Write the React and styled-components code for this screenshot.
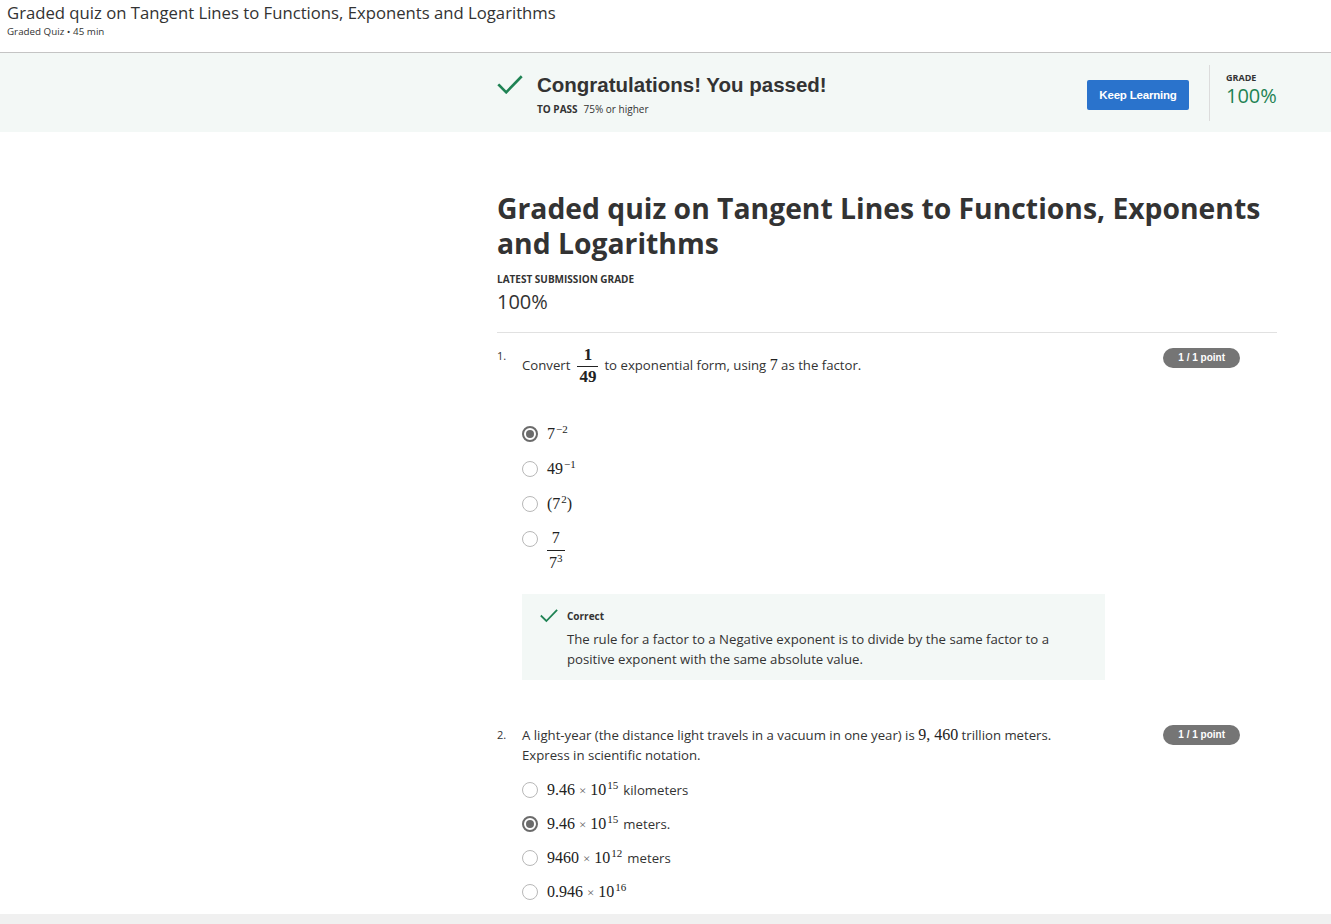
import React from 'react';
import styled, { createGlobalStyle } from 'styled-components';

const GlobalStyle = createGlobalStyle`
body {
    margin: 0;
    background: #fff;
    font-family: 'Open Sans', 'Liberation Sans', sans-serif;
    color: #333;
}
`;

const Header = styled.header`
    height: 53px;
    box-sizing: border-box;
    padding: 3px 7px 0;
    border-bottom: 1px solid #c4c4c4;
`;

const HeaderTitle = styled.div`
    font-size: 16.7px;
    line-height: 20px;
    color: #333;
`;

const HeaderMeta = styled.div`
    font-size: 9.8px;
    line-height: 12px;
    margin-top: 3px;
    color: #333;
`;

const Banner = styled.section`
    height: 79px;
    background: #f3f8f6;
    display: flex;
    align-items: center;
`;

const Column = styled.div`
    margin-left: 497px;
    width: 780px;
`;

const BannerRow = styled(Column)`
    display: flex;
    align-items: center;
    justify-content: space-between;
`;

const PassBlock = styled.div`
    display: grid;
    grid-template-columns: 40px auto;
    align-items: center;
    margin-top: 2px;
`;

const PassTitle = styled.div`
    font-family: 'Liberation Sans', Arial, sans-serif;
    font-weight: bold;
    font-size: 20.5px;
    line-height: 26px;
    color: #333;
`;

const PassMeta = styled.div`
    grid-column: 2;
    font-size: 10px;
    line-height: 14px;
    margin-top: 4px;
    b {
        font-weight: 700;
        margin-right: 6px;
    }
`;

const RightGroup = styled.div`
    display: flex;
    align-items: center;
`;

const KeepButton = styled.button`
    width: 102px;
    height: 30px;
    border: none;
    border-radius: 2px;
    background: #2a73cc;
    color: #fff;
    font-family: 'Liberation Sans', Arial, sans-serif;
    font-weight: bold;
    font-size: 11.5px;
    letter-spacing: -0.2px;
    margin-top: 4px;
    cursor: pointer;
`;

const Divider = styled.div`
    width: 1px;
    height: 56px;
    background: #dcdcdc;
    margin: 0 16px 0 20px;
`;

const GradeBlock = styled.div`
    width: 51px;
    height: 56px;
    box-sizing: border-box;
    padding-top: 7px;
`;

const GradeLabel = styled.div`
    font-size: 9px;
    line-height: 12px;
    font-weight: 700;
    color: #333;
`;

const GradeValue = styled.div`
    font-size: 20px;
    line-height: 24px;
    color: #1f8354;
`;

const Main = styled(Column)`
    padding-top: 59px;
`;

const Title = styled.h1`
    margin: 0;
    font-size: 28.3px;
    line-height: 35px;
    font-weight: 700;
    color: #333;
`;

const SubLabel = styled.div`
    margin-top: 11px;
    font-size: 10px;
    line-height: 14px;
    font-weight: 700;
    color: #333;
`;

const BigGrade = styled.div`
    margin-top: 4px;
    font-size: 20px;
    line-height: 24px;
    color: #333;
`;

const Rule = styled.hr`
    margin: 18px 0 13px;
    border: none;
    border-top: 1px solid #e1e1e1;
`;

const QRow = styled.div`
    display: grid;
    grid-template-columns: 25px 1fr auto;
    margin-top: ${p => p.$top || 0}px;
`;

const QNum = styled.div`
    font-size: 11px;
    line-height: 20px;
    color: #333;
`;

const QBody = styled.div`
    min-width: 0;
`;

const QText = styled.div`
    font-size: 13.2px;
    line-height: 20px;
    color: #333;
    max-width: 560px;
`;

const PointBadge = styled.div`
    height: 20px;
    margin: ${p => (p.$flat ? 0 : 2)}px 37px 0 20px;
    padding: 0 15px;
    border-radius: 10px;
    background: #757575;
    color: #fff;
    font-family: 'Liberation Sans', Arial, sans-serif;
    font-weight: bold;
    font-size: 10px;
    line-height: 20px;
    white-space: nowrap;
`;

const OptionList = styled.div`
    display: flex;
    flex-direction: column;
    gap: ${p => p.$gap}px;
    margin-top: ${p => p.$top}px;
`;

const Option = styled.label`
    display: flex;
    align-items: flex-start;
    gap: 9px;
    font-size: 13.2px;
    line-height: 20px;
    height: ${p => (p.$tall ? 'auto' : '20px')};
    color: #333;
`;

const Radio = styled.span`
    flex: none;
    width: 16px;
    height: 16px;
    margin-top: 2px;
    box-sizing: border-box;
    border-radius: 50%;
    border: ${p => (p.$checked ? '2px solid #6b6b6b' : '1px solid #b8b8b8')};
    background: #fff;
    display: flex;
    align-items: center;
    justify-content: center;
    &::after {
        content: '';
        display: ${p => (p.$checked ? 'block' : 'none')};
        width: 8px;
        height: 8px;
        border-radius: 50%;
        background: #6b6b6b;
    }
`;

const MathText = styled.span`
    font-family: 'Liberation Serif', 'DejaVu Serif', serif;
    font-size: 16px;
    line-height: 20px;
    color: #222;
    sup {
        font-size: 11px;
        vertical-align: 6px;
        line-height: 0;
        margin-left: 1px;
    }
`;

const Times = styled.span`
    margin: 0 4px;
    color: #666;
    font-size: 13px;
`;

const Unit = styled.span`
    margin-left: 5px;
    font-family: 'Open Sans', sans-serif;
    font-size: 13.2px;
    color: #333;
`;

const Fraction = styled.span`
    display: inline-flex;
    flex-direction: column;
    align-items: center;
    vertical-align: middle;
    margin: ${p => (p.$inline ? '0 6px 0 7px' : '0')};
    font-family: 'Liberation Serif', 'DejaVu Serif', serif;
    font-size: ${p => (p.$inline ? 17 : 16)}px;
    font-weight: ${p => (p.$inline ? 700 : 400)};
    color: #222;
    line-height: 18px;
    sup {
        font-size: 11px;
        vertical-align: 6px;
        line-height: 0;
    }
`;

const Numer = styled.span`
    align-self: stretch;
    text-align: center;
    padding: 0 2px ${p => p.$gap}px;
    border-bottom: 1px solid #222;
`;

const Denom = styled.span`
    padding: ${p => p.$gap}px 2px 0;
`;

const Feedback = styled.div`
    margin-top: 22px;
    width: 583px;
    box-sizing: border-box;
    background: #f3f8f6;
    padding: 15px 18px 11px;
    display: grid;
    grid-template-columns: 27px 1fr;
    align-items: center;
`;

const FeedbackTitle = styled.div`
    font-size: 10px;
    font-weight: 700;
    line-height: 14px;
    color: #333;
`;

const FeedbackText = styled.div`
    grid-column: 2;
    margin-top: 6px;
    font-size: 13.2px;
    line-height: 20px;
    color: #333;
`;

const Footer = styled.div`
    margin-top: 12px;
    height: 40px;
    background: #f0f0f0;
`;

const Check = ({ size = 24 }) => (
    <svg width={size} height={size * 0.75} viewBox="0 0 24 18" fill="none">
        <polyline points="2,9.5 8.5,16 22,2" stroke="#1f8354" strokeWidth="2.4" strokeLinecap="square" />
    </svg>
);

const Sci = ({ base, exp, unit }) => (
    <span>
        <MathText>
            {base}
            <Times>×</Times>
            10<sup>{exp}</sup>
        </MathText>
        {unit && <Unit>{unit}</Unit>}
    </span>
);

const App = () => {
    return (
        <>
            <GlobalStyle />
            <Header>
                <HeaderTitle>Graded quiz on Tangent Lines to Functions, Exponents and Logarithms</HeaderTitle>
                <HeaderMeta>Graded Quiz • 45 min</HeaderMeta>
            </Header>
            <Banner>
                <BannerRow>
                    <PassBlock>
                        <Check size={26} />
                        <PassTitle>Congratulations! You passed!</PassTitle>
                        <PassMeta><b>TO PASS</b>75% or higher</PassMeta>
                    </PassBlock>
                    <RightGroup>
                        <KeepButton>Keep Learning</KeepButton>
                        <Divider />
                        <GradeBlock>
                            <GradeLabel>GRADE</GradeLabel>
                            <GradeValue>100%</GradeValue>
                        </GradeBlock>
                    </RightGroup>
                </BannerRow>
            </Banner>
            <Main>
                <Title>Graded quiz on Tangent Lines to Functions, Exponents and Logarithms</Title>
                <SubLabel>LATEST SUBMISSION GRADE</SubLabel>
                <BigGrade>100%</BigGrade>
                <Rule />

                <QRow>
                    <QNum>1.</QNum>
                    <QBody>
                        <QText>
                            Convert
                            <Fraction $inline>
                                <Numer $gap={2}>1</Numer>
                                <Denom $gap={1}>49</Denom>
                            </Fraction>
                            to exponential form, using <MathText>7</MathText> as the factor.
                        </QText>
                        <OptionList $gap={15} $top={38}>
                            <Option>
                                <Radio $checked />
                                <MathText>7<sup>−2</sup></MathText>
                            </Option>
                            <Option>
                                <Radio />
                                <MathText>49<sup>−1</sup></MathText>
                            </Option>
                            <Option>
                                <Radio />
                                <MathText>(7<sup>2</sup>)</MathText>
                            </Option>
                            <Option $tall>
                                <Radio />
                                <Fraction>
                                    <Numer $gap={3}>7</Numer>
                                    <Denom $gap={3}>7<sup>3</sup></Denom>
                                </Fraction>
                            </Option>
                        </OptionList>
                        <Feedback>
                            <Check size={18} />
                            <FeedbackTitle>Correct</FeedbackTitle>
                            <FeedbackText>
                                The rule for a factor to a Negative exponent is to divide by the same factor to a positive exponent with the same absolute value.
                            </FeedbackText>
                        </Feedback>
                    </QBody>
                    <PointBadge>1 / 1 point</PointBadge>
                </QRow>

                <QRow $top={45}>
                    <QNum>2.</QNum>
                    <QBody>
                        <QText>
                            A light-year (the distance light travels in a vacuum in one year) is <MathText>9, 460</MathText> trillion meters. Express in scientific notation.
                        </QText>
                        <OptionList $gap={14} $top={15}>
                            <Option>
                                <Radio />
                                <Sci base="9.46" exp="15" unit="kilometers" />
                            </Option>
                            <Option>
                                <Radio $checked />
                                <Sci base="9.46" exp="15" unit="meters." />
                            </Option>
                            <Option>
                                <Radio />
                                <Sci base="9460" exp="12" unit="meters" />
                            </Option>
                            <Option>
                                <Radio />
                                <Sci base="0.946" exp="16" />
                            </Option>
                        </OptionList>
                    </QBody>
                    <PointBadge $flat>1 / 1 point</PointBadge>
                </QRow>
            </Main>
            <Footer />
        </>
    );
};

export default App;
